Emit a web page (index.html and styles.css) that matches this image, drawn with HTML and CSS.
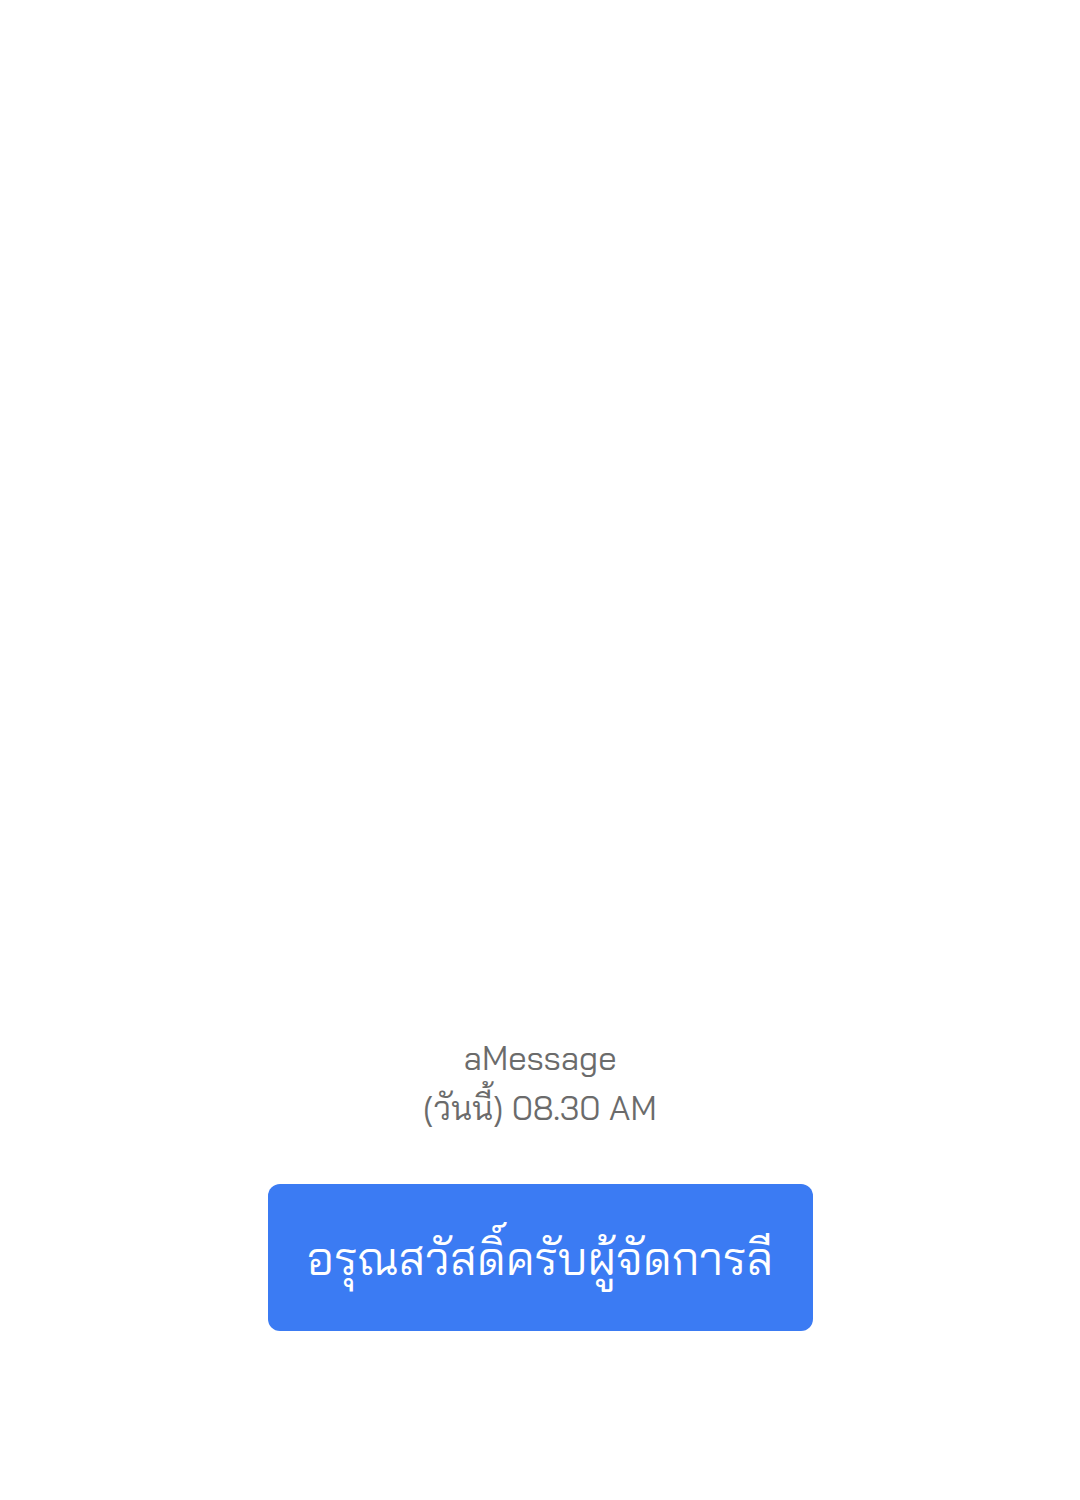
FILE: index.html
```html
<!DOCTYPE html>
<html lang="th">
<head>
    <meta charset="UTF-8">
    <meta name="viewport" content="width=device-width, initial-scale=1.0">
    <title>aMessage</title>
    <link rel="stylesheet" href="styles.css">
</head>
<body>
    <div id="chat">
        <div class="meta">
            <div class="sender">aMessage</div>
            <div class="time">(วันนี้) 08.30 AM</div>
        </div>
        <div class="bubble">อรุณสวัสดิ์ครับผู้จัดการลี</div>
    </div>
</body>
</html>
```

FILE: styles.css
```css
body {
    font-family: "Bai Jamjuree", "Noto Sans Thai Looped", sans-serif;
    margin: 0;
    background-color: #ffffff;
    height: 100vh;
}
#chat {
    height: 100%;
    display: flex;
    flex-direction: column;
    align-items: center;
    justify-content: flex-end;
    padding-bottom: 169px;
    box-sizing: border-box;
}
.meta {
    text-align: center;
    color: #6b6b6b;
    font-size: 33px;
    line-height: 50px;
    margin-bottom: 51px;
}
.bubble {
    width: 545px;
    height: 147px;
    box-sizing: border-box;
    display: flex;
    align-items: center;
    justify-content: center;
    background-color: #3b7bf3;
    color: #ffffff;
    font-size: 46px;
    border-radius: 12px;
}
```
